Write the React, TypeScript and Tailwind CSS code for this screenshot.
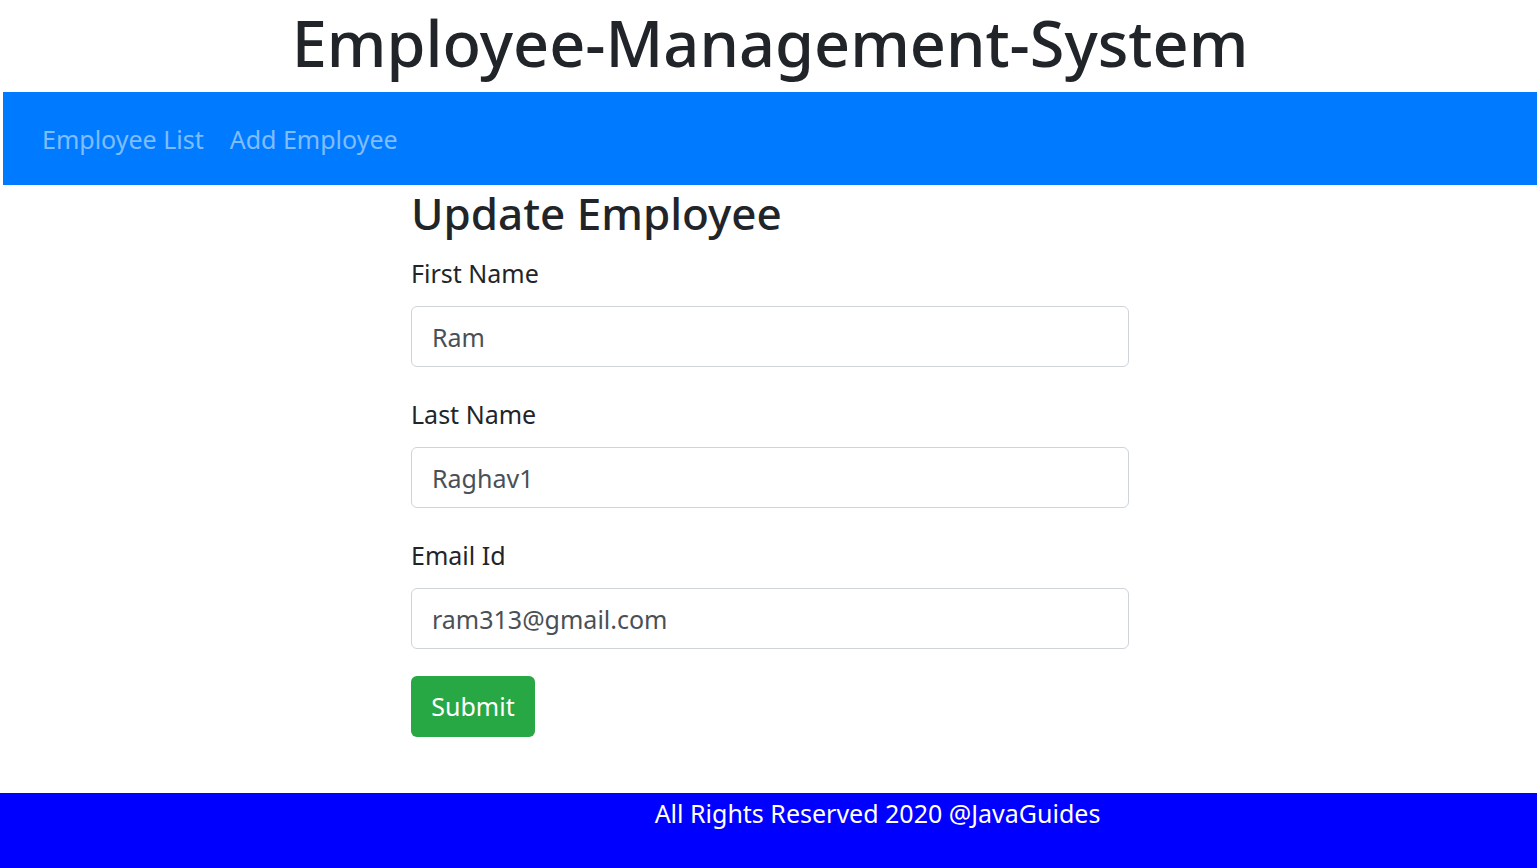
export default function App() {
  return (
    <div className="min-h-[868px] bg-white text-[#212529] font-['Noto_Sans',sans-serif] flex flex-col">
      {/* Page title */}
      <h1 className="h-[92px] ml-[3px] pb-[8px] flex items-center justify-center text-[63px] font-medium leading-none text-[#212529]">
        Employee-Management-System
      </h1>

      {/* Navbar */}
      <nav className="h-[93px] ml-[3px] bg-[#007bff] flex items-center px-[26px] pt-[2px]">
        <a href="#" className="px-[13px] text-[25px] text-white/50">Employee List</a>
        <a href="#" className="px-[13px] text-[25px] text-white/50">Add Employee</a>
      </nav>

      {/* Update form */}
      <main className="ml-[3px] flex justify-center">
        <div className="w-[718px]">
          <h2 className="h-[56px] mb-[12px] text-[44px] font-medium leading-[56px]">Update Employee</h2>
          <form onSubmit={(e) => e.preventDefault()}>
            <div className="mb-[27px]">
              <label className="block h-[40px] mb-[13px] text-[25px] leading-[40px]">First Name</label>
              <input
                defaultValue="Ram"
                className="block w-full h-[61px] px-[20px] text-[25px] text-[#495057] border border-[#ced4da] rounded-[6px] outline-none"
              />
            </div>
            <div className="mb-[27px]">
              <label className="block h-[40px] mb-[13px] text-[25px] leading-[40px]">Last Name</label>
              <input
                defaultValue="Raghav1"
                className="block w-full h-[61px] px-[20px] text-[25px] text-[#495057] border border-[#ced4da] rounded-[6px] outline-none"
              />
            </div>
            <div className="mb-[27px]">
              <label className="block h-[40px] mb-[13px] text-[25px] leading-[40px]">Email Id</label>
              <input
                defaultValue="ram313@gmail.com"
                className="block w-full h-[61px] px-[20px] text-[25px] text-[#495057] border border-[#ced4da] rounded-[6px] outline-none"
              />
            </div>
            <button
              type="submit"
              className="h-[61px] w-[124px] bg-[#28a745] text-white text-[25px] rounded-[6px]"
            >
              Submit
            </button>
          </form>
        </div>
      </main>

      {/* Footer */}
      <footer className="mt-[56px] h-[76px] bg-[#0000ff] flex justify-center pl-[218px]">
        <span className="text-white text-[25px] leading-[40px]">All Rights Reserved 2020 @JavaGuides</span>
      </footer>
    </div>
  );
}
